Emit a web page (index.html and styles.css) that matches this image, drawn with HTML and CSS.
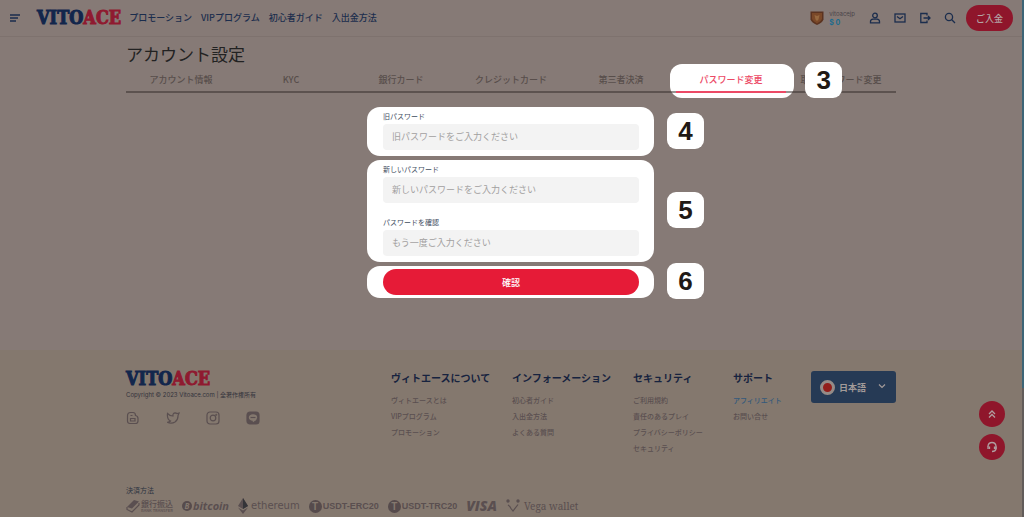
FILE: index.html
```html
<!DOCTYPE html>
<html lang="ja">
<head>
    <meta charset="UTF-8">
    <meta name="viewport" content="width=device-width, initial-scale=1.0">
    <title>アカウント設定</title>
    <link rel="stylesheet" href="styles.css">
</head>
<body>
    <header class="header">
        <button class="icon-btn menu-btn" aria-label="メニュー">
            <svg width="12" height="12" viewBox="0 0 12 12"><path d="M1 3h10M1 6h8M1 9h6"/></svg>
        </button>
        <a class="logo" href="#">VITO<span>ACE</span></a>
        <nav class="main-nav">
            <a href="#">プロモーション</a>
            <a href="#">VIPプログラム</a>
            <a href="#">初心者ガイド</a>
            <a href="#">入出金方法</a>
        </nav>
        <div class="user">
            <svg width="14" height="14" viewBox="0 0 14 14">
                <path d="M0.500 0.500h13v8q-1 3 -6.500 5.500q-5.500 -2.500 -6.500 -5.500z" fill="#5b3320"/>
                <path d="M2 2h10v6q-1 2.500 -5 4.500q-4 -2 -5 -4.500z" fill="#7a4828"/>
                <path d="M4.500 4l2.500 1l2.500 -1l-1 4.500l-1.500 1.500l-1.500 -1.500z" fill="#96683f"/>
            </svg>
            <div class="user-info">
                <span>vitoacejp</span>
                <strong>$ 0</strong>
            </div>
        </div>
        <div class="header-icons">
            <button class="icon-btn" aria-label="アカウント">
                <svg width="12" height="12" viewBox="0 0 12 12"><circle cx="6" cy="3.5" r="2.3"/><path d="M4 7.200Q1.500 7.500 1.500 9.500V10.800H10.500V9.500Q10.500 7.500 8 7.200z"/></svg>
            </button>
            <button class="icon-btn" aria-label="メッセージ">
                <svg width="12" height="12" viewBox="0 0 12 12"><rect x="1" y="2" width="10" height="8"/><path d="M3 4.5l3 2.2l3 -2.2"/></svg>
            </button>
            <button class="icon-btn" aria-label="ログアウト">
                <svg width="12" height="12" viewBox="0 0 12 12"><path d="M8 3.5V1.5H1.8v9H8V8.500M4.500 6H11M9 4l2 2l-2 2"/></svg>
            </button>
            <button class="icon-btn" aria-label="検索">
                <svg width="12" height="12" viewBox="0 0 12 12"><circle cx="5" cy="5" r="3.6"/><path d="M7.800 7.800L11 11"/></svg>
            </button>
        </div>
        <button class="deposit">ご入金</button>
    </header>

    <main class="container main">
        <h1>アカウント設定</h1>
        <nav class="tabs">
            <a href="#">アカウント情報</a>
            <a href="#">KYC</a>
            <a href="#">銀行カード</a>
            <a href="#">クレジットカード</a>
            <a href="#">第三者決済</a>
            <a href="#" class="active">パスワード変更</a>
            <a href="#">取引パスワード変更</a>
            <span class="step step-tab">3</span>
        </nav>

        <form class="password-form">
            <div class="panel">
                <label for="oldPassword">旧パスワード</label>
                <input type="password" id="oldPassword" placeholder="旧パスワードをご入力ください">
                <span class="step">4</span>
            </div>
            <div class="panel">
                <label for="newPassword">新しいパスワード</label>
                <input type="password" id="newPassword" placeholder="新しいパスワードをご入力ください">
                <label for="confirmPassword" class="second">パスワードを確認</label>
                <input type="password" id="confirmPassword" placeholder="もう一度ご入力ください">
                <span class="step">5</span>
            </div>
            <div class="panel panel-submit">
                <button type="submit">確認</button>
                <span class="step">6</span>
            </div>
        </form>
    </main>

    <footer class="footer">
        <div class="container">
            <div class="footer-top">
                <div class="brand">
                    <a class="logo" href="#">VITO<span>ACE</span></a>
                    <p>Copyright © 2023 Vitoace.com | 全著作権所有</p>
                    <div class="social">
                        <a href="#" aria-label="ブログ">
                            <svg width="14" height="14" viewBox="0 0 14 14"><path d="M1.500 5q0 -3.500 3 -3.500h2.500q2.500 0 2.500 3q2.500 .5 2.500 3v2.500q0 2.500 -2.500 2.500h-5.500q-2.500 0 -2.500 -2.500z"/><path d="M4.500 4.500h2M4.500 7.500h4.500v2.500h-4.500z"/></svg>
                        </a>
                        <a href="#" aria-label="Twitter">
                            <svg width="14" height="14" viewBox="0 0 14 14"><path d="M1.500 2.500Q4 5.200 7 5Q6.600 2 9.200 1.900Q10.300 1.900 11 2.700L13 2.200L12 4.500Q12.200 8.800 9 11Q5.500 13.200 1.200 11.300Q3.500 11.200 4.500 10Q.8 8.200 1.500 2.500z"/></svg>
                        </a>
                        <a href="#" aria-label="Instagram">
                            <svg width="14" height="14" viewBox="0 0 14 14"><rect x="1" y="1" width="12" height="12" rx="3"/><circle cx="7" cy="7" r="2.800"/><circle cx="10.300" cy="3.700" r=".4"/></svg>
                        </a>
                        <a href="#" aria-label="LINE">
                            <svg width="14" height="14" viewBox="0 0 14 14"><rect x="1" y="1" width="12" height="12" rx="3" class="fill"/><path class="bubble" d="M7 3.200C4.400 3.200 2.800 4.600 2.800 6.500C2.800 8.400 4.500 9.500 6.600 9.700L7 11.200Q11.200 9 11.200 6.500C11.200 4.600 9.600 3.200 7 3.200z"/><path d="M4.500 6.500h5"/></svg>
                        </a>
                    </div>
                </div>
                <section>
                    <h2>ヴィトエースについて</h2>
                    <a href="#">ヴィトエースとは</a>
                    <a href="#">VIPプログラム</a>
                    <a href="#">プロモーション</a>
                </section>
                <section>
                    <h2>インフォーメーション</h2>
                    <a href="#">初心者ガイド</a>
                    <a href="#">入出金方法</a>
                    <a href="#">よくある質問</a>
                </section>
                <section>
                    <h2>セキュリティ</h2>
                    <a href="#">ご利用規約</a>
                    <a href="#">責任のあるプレイ</a>
                    <a href="#">プライバシーポリシー</a>
                    <a href="#">セキュリティ</a>
                </section>
                <section>
                    <h2>サポート</h2>
                    <a href="#" class="affiliate">アフィリエイト</a>
                    <a href="#">お問い合せ</a>
                </section>
                <div class="language">
                    <span class="flag"></span>
                    <select aria-label="言語">
                        <option>日本語</option>
                    </select>
                    <svg width="8" height="8" viewBox="0 0 8 8"><path d="M1 2.500l3 3l3 -3"/></svg>
                </div>
            </div>

            <p class="payment-title">決済方法</p>
            <div class="payments">
                <span class="pay bank">
                    <svg width="14" height="14" viewBox="0 0 14 14"><path d="M1 8L8 1l5 1.500l-7 7z"/><path class="line" d="M1 8v2.500l5 2.500l7 -7V4"/></svg>
                    <span class="bank-name">銀行振込<small>BANK TRANSFER</small></span>
                </span>
                <span class="pay bitcoin"><span class="coin small">B</span>bitcoin</span>
                <span class="pay ethereum">
                    <svg width="10" height="16" viewBox="0 0 10 16"><path d="M5 0L10 8L5 11L0 8z"/><path d="M0 9.500L5 12.500L10 9.500L5 16z"/><path class="shade" d="M5 0V11L10 8z"/></svg>
                    ethereum
                </span>
                <span class="pay usdt"><span class="coin">T</span>USDT-ERC20</span>
                <span class="pay usdt"><span class="coin">T</span>USDT-TRC20</span>
                <span class="pay visa">VISA</span>
                <span class="pay vega">
                    <svg width="14" height="14" viewBox="0 0 14 14"><circle cx="2" cy="2" r="1.700"/><circle cx="12" cy="2" r="1.700"/><path class="line" d="M2 6Q4 7 5 9.500L7 12L12 5.500"/></svg>
                    Vega wallet
                </span>
            </div>
        </div>
    </footer>

    <div class="floating">
        <button aria-label="トップへ戻る">
            <svg width="10" height="10" viewBox="0 0 10 10"><path d="M2 5l3 -3l3 3M2 8.500l3 -3l3 3"/></svg>
        </button>
        <button aria-label="サポート">
            <svg width="12" height="12" viewBox="0 0 12 12"><path d="M2 6V5q.5 -3.500 4 -3.500t4 3.500v3q-.5 2.500 -4 2.500"/><path d="M2 5.500v2.500M3.500 5.500v2.500M8.500 5.500v2.500M10 5.500v2.500"/></svg>
        </button>
    </div>
    <div class="scroll-strip"></div>
</body>
</html>
```
FILE: styles.css
```css
* {
    box-sizing: border-box;
}
body {
    margin: 0;
    padding-right: 2px;
    min-height: 100vh;
    display: flex;
    flex-direction: column;
    background: #867a76;
    color: #222;
    font-family: "Noto Sans CJK JP", sans-serif;
    font-size: 9px;
    line-height: 16px;
}
a {
    color: inherit;
    text-decoration: none;
}
button, input, select {
    font-family: inherit;
    font-size: 9px;
    border: none;
}
button {
    cursor: pointer;
    padding: 0;
}
h1, h2, p {
    margin: 0;
}
svg {
    display: block;
    fill: none;
    stroke: currentColor;
    stroke-width: 1.3;
}
.container {
    width: 100%;
    max-width: 770px;
    margin: 0 auto;
}

/* header */
.header {
    display: flex;
    align-items: center;
    height: 37px;
    padding: 0 9px;
    border-bottom: 1px solid #7e726e;
    color: #1b2d4d;
}
.icon-btn {
    background: none;
    color: inherit;
}
.menu-btn {
    margin-right: 16px;
}
.logo {
    color: #12264c;
    font-family: "DejaVu Serif Condensed", "DejaVu Serif", serif;
    font-size: 18px;
    font-weight: bold;
    line-height: 18px;
    -webkit-text-stroke: 1px currentColor;
}
.logo span {
    color: #8f1a30;
}
.main-nav {
    display: flex;
    gap: 9px;
    margin-left: 8px;
    font-weight: 500;
}
.user {
    display: flex;
    align-items: center;
    gap: 5px;
    margin-left: auto;
}
.user svg {
    stroke: none;
}
.user-info {
    display: flex;
    flex-direction: column;
    font-family: Inter, sans-serif;
    font-size: 6px;
    line-height: 9px;
    color: #4a4449;
}
.user-info strong {
    color: #1c6b8e;
    font-size: 7px;
}
.header-icons {
    display: flex;
    gap: 13px;
    margin: 0 10px 0 14px;
}
.deposit {
    width: 47px;
    height: 26px;
    border-radius: 13px;
    background: #8f162b;
    color: #b3a5a5;
    font-weight: 500;
}

/* account settings */
.main {
    isolation: isolate;
    padding: 3px 0 52px;
}
h1 {
    font-size: 17px;
    font-weight: 400;
    line-height: 27px;
}
.tabs {
    position: relative;
    display: grid;
    grid-template-columns: repeat(7, 1fr);
    border-bottom: 2px solid rgba(50, 42, 40, 0.5);
}
.tabs a {
    position: relative;
    padding: 5px 0 3px;
    text-align: center;
    font-weight: 500;
    color: #584e4b;
}
.tabs .active {
    color: #ec4a66;
}
.tabs .active::before {
    content: "";
    position: absolute;
    z-index: -1;
    inset: -3px -8px -7px -6px;
    border-radius: 12px;
    background: #fff;
}
.tabs .active::after {
    content: "";
    position: absolute;
    left: 0;
    right: 0;
    bottom: -2px;
    height: 2px;
    background: #ec4a66;
}
.step {
    position: absolute;
    top: 50%;
    left: 100%;
    width: 37px;
    height: 36px;
    margin: -19px 0 0 13px;
    border-radius: 9px;
    background: #fff;
    color: #211915;
    font-family: "Liberation Sans", Arial, sans-serif;
    font-size: 26px;
    font-weight: bold;
    line-height: 36px;
    text-align: center;
}
.step-tab {
    left: 86%;
    margin-top: -17px;
    margin-left: 17px;
}
.password-form {
    display: flex;
    flex-direction: column;
    gap: 4px;
    max-width: 288px;
    margin: 14px auto 0;
}
.panel {
    position: relative;
    display: flex;
    flex-direction: column;
    margin-right: 1px;
    padding: 2px 15px 6px 16px;
    border-radius: 13px;
    background: #fff;
}
.panel label {
    margin-bottom: 1px;
    font-size: 7px;
    line-height: 14px;
    color: #3e4c5e;
}
.panel .second {
    margin-top: 12px;
}
.panel input {
    width: 100%;
    height: 26px;
    padding: 0 9px 1px;
    border-radius: 4px;
    background: #f3f3f3;
}
.panel input::placeholder {
    color: #a2a0a0;
}
.panel-submit {
    padding-top: 3px;
    padding-bottom: 3px;
}
.panel-submit button {
    height: 26px;
    border-radius: 13px;
    background: #e61b37;
    color: #fff;
    font-weight: 500;
}

/* footer */
.footer {
    flex: 1;
    padding: 20px 0 2px;
    background: #84786e;
    color: #5a4f50;
}
.footer svg {
    stroke-width: 1.2;
}
.footer-top {
    display: grid;
    grid-template-columns: 1fr 121px 121px 100px 78px 85px;
    align-items: start;
    height: 112px;
}
.footer .logo {
    display: block;
}
.brand p {
    font-family: Inter, "Noto Sans CJK JP", sans-serif;
    font-size: 6px;
    line-height: 14px;
    color: #33333c;
}
.social {
    display: flex;
    gap: 26px;
    margin-top: 9px;
}
.social .fill {
    fill: currentColor;
}
.social .bubble {
    fill: #84786e;
    stroke: none;
}
.footer section {
    display: flex;
    flex-direction: column;
    font-size: 7px;
    font-weight: 500;
    white-space: nowrap;
}
.footer h2 {
    margin-bottom: 6px;
    font-size: 10px;
    line-height: 16px;
    font-weight: 700;
    color: #17233f;
}
.footer .affiliate {
    color: #33597c;
}
.language {
    position: relative;
    display: flex;
    align-items: center;
    height: 32px;
    margin-top: 1px;
    border-radius: 3px;
    background: #263a55;
    color: #a39b99;
}
.language select {
    position: absolute;
    inset: 0;
    width: 100%;
    padding: 0 0 0 28px;
    appearance: none;
    background: none;
    color: inherit;
    font-weight: 700;
}
.language svg {
    margin: 0 10px 3px auto;
}
.flag {
    width: 15px;
    height: 15px;
    margin-left: 9px;
    border: 3px solid #958b87;
    border-radius: 50%;
    background: #921e1b;
}
.payment-title {
    font-size: 7px;
    color: #2b3240;
}
.payments {
    display: flex;
    align-items: center;
    gap: 9px;
    height: 16px;
    white-space: nowrap;
}
.pay {
    display: flex;
    align-items: center;
    gap: 1px;
}
.pay svg {
    fill: currentColor;
    stroke: none;
}
.pay .line {
    fill: none;
    stroke: currentColor;
}
.pay .shade {
    fill: #343438;
}
.bank-name {
    display: flex;
    flex-direction: column;
    font-size: 8px;
    font-weight: 500;
    line-height: 8px;
}
.bank-name small {
    font-size: 4px;
    line-height: 4px;
}
.coin {
    width: 13px;
    height: 13px;
    border-radius: 50%;
    background: #564b4c;
    color: #84786e;
    font-size: 10px;
    font-weight: bold;
    line-height: 13px;
    text-align: center;
}
.coin.small {
    width: 10px;
    height: 10px;
    font-size: 8px;
    line-height: 10px;
}
.bitcoin {
    font-family: "Open Sans", sans-serif;
    font-size: 11px;
    font-style: italic;
    font-weight: 700;
}
.ethereum {
    gap: 3px;
    font-family: "DejaVu Sans", sans-serif;
    font-size: 10px;
}
.usdt {
    font-family: "Liberation Sans", Arial, sans-serif;
    font-size: 9px;
    font-weight: bold;
}
.visa {
    font-family: "Open Sans", sans-serif;
    font-size: 14px;
    font-style: italic;
    font-weight: 800;
}
.vega {
    gap: 4px;
    font-family: "Noto Serif", "DejaVu Serif Condensed", serif;
    font-size: 10px;
}

/* floating buttons */
.floating {
    position: fixed;
    right: 19px;
    bottom: 57px;
    display: flex;
    flex-direction: column;
    gap: 7px;
}
.floating button {
    display: grid;
    place-items: center;
    width: 26px;
    height: 26px;
    border-radius: 50%;
    background: #8f162b;
    color: #b09ea0;
}
.scroll-strip {
    position: fixed;
    top: 0;
    right: 0;
    bottom: 0;
    width: 2px;
    background: linear-gradient(#3d6577 75%, #625c5a 75%);
}
```
